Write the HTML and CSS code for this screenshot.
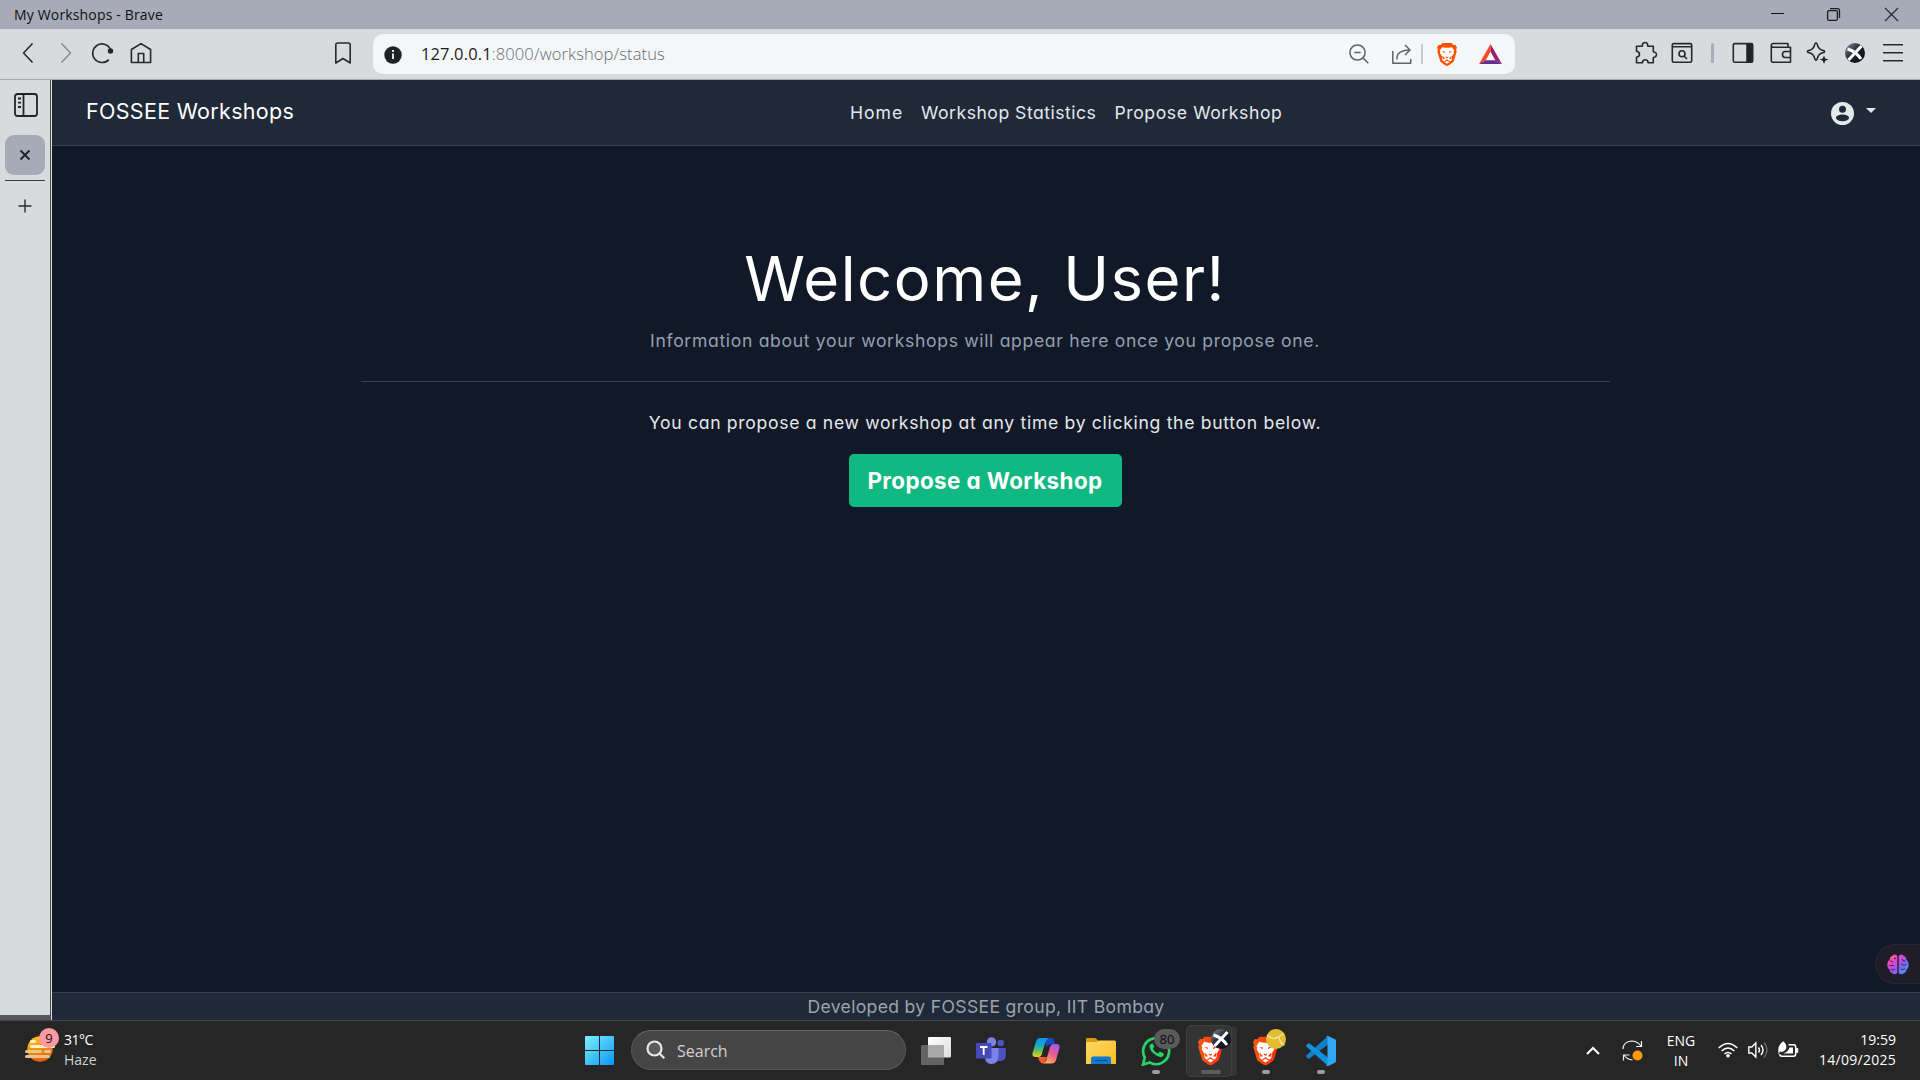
FILE: index.html
```html
<!DOCTYPE html>
<html lang="en">
<head>
<meta charset="utf-8">
<title>My Workshops - Brave</title>
<link rel="stylesheet" href="styles.css">
</head>
<body>
<svg class="defs" width="0" height="0">
  <defs>
    <linearGradient id="gLion" x1="0" y1="0" x2="1" y2="0"><stop offset="0" stop-color="#ff5a12"/><stop offset="1" stop-color="#ff2a08"/></linearGradient>
    <linearGradient id="gWin" gradientUnits="userSpaceOnUse" x1="0" y1="0" x2="29" y2="29"><stop offset="0" stop-color="#7df0ff"/><stop offset="1" stop-color="#0796f8"/></linearGradient>
    <linearGradient id="gBall" x1="0" y1="0" x2="1" y2="1"><stop offset="0" stop-color="#8c94a6"/><stop offset=".5" stop-color="#1d202b"/><stop offset="1" stop-color="#0b0c12"/></linearGradient>
    <symbol id="lion" viewBox="0 0 26 30">
      <path d="M7 0h12l2.400 2.700 2.600-.2L26 6l-1 2.500.6 2.500-4 13.500L15.500 29 13 30l-2.500-1L4.400 24.500.4 11 1 8.500 0 6l2-3.500 2.600.2z"/>
      <path fill="#fff" d="M6.500 5.500 11 6.300h4l4.500-.8 2.900 4.300-.7 1.600.5 1.800-3.200 5.200.5 1.400-.5 2.600-2.200 1.700-3.800-2.800-3.800 2.800L7 22.400l-.5-2.600.5-1.400-3.200-5.200.5-1.800-.7-1.600zM13 23l3.200 2L13 27l-3.200-2z"/>
      <path d="M6.500 10.500l4 .8-.6 2zM19.500 10.500l-4 .8.6 2zM11 17.500l2 .8 2-.8-.5 1.600L13 20l-1.500-.9zM7 16.500l3.500 4-3 .5zM19 16.500l-3.500 4 3 .5z"/>
    </symbol>
    <symbol id="avatar" viewBox="0 0 20 20">
      <circle cx="10" cy="10" r="10" fill="url(#gBall)"/>
      <path d="M3.500 17 16.500 3M2.500 6q5 1.500 8 4t5.500 6" stroke="#fff" stroke-width="3" fill="none"/>
    </symbol>
  </defs>
</svg>

<header class="titlebar">
  <span class="t-title">My Workshops - Brave</span>
  <div class="wincontrols">
    <svg width="15" height="15" viewBox="0 0 15 15"><path d="M1 6.500h13" stroke="#111"/></svg>
    <svg class="restore" width="15" height="15" viewBox="0 0 15 15" fill="none" stroke="#1b1c20" stroke-width="1.300"><rect x="1.600" y="3.600" width="9.800" height="9.800" rx="1.500"/><path d="M4 1.600h7.500q2 0 2 2V11"/></svg>
    <svg width="15" height="15" viewBox="0 0 15 15"><path d="m1 1 13 13M14 1 1 14" stroke="#2a2b30" stroke-width="1.200"/></svg>
  </div>
</header>

<nav class="toolbar">
  <div class="navgroup">
    <svg class="ic" viewBox="0 0 24 24"><path d="M16.500 2.500 7.500 12l9 9.500"/></svg>
    <svg class="ic faded" viewBox="0 0 24 24"><path d="m7.500 2.500 9 9.500-9 9.500"/></svg>
    <svg class="ic reload" viewBox="0 0 24 24"><path d="M18.800 18.600A9.300 9.300 0 1 1 20.300 8"/><circle cx="20.500" cy="10" r="1.900" class="solid"/></svg>
    <svg class="ic home" viewBox="0 0 24 24"><path d="M2.400 8.500 12 2.600l9.600 5.900v13H2.400zM9.300 21.500v-9h5.400v9"/></svg>
  </div>
  <svg class="ic bookmark" viewBox="0 0 24 24"><path d="M4.800 22V4q0-2 2-2h10.400q2 0 2 2v18L12 17.500z"/></svg>
  <div class="urlbar">
    <svg class="info" viewBox="0 0 18 18"><circle cx="9" cy="9" r="8.700" fill="#202124"/><path d="M9 4v2M9 7.500V13" stroke="#f5f6f8" stroke-width="1.800"/></svg>
    <span class="t-url"><b>127.0.0.1</b>:8000/workshop/status</span>
    <div class="urlicons">
      <svg class="ic grey" viewBox="0 0 24 24"><circle cx="10.500" cy="10.500" r="7.600"/><path d="m16 16 5.300 5.300M7.300 10.500h6.400"/></svg>
      <svg class="ic grey share" viewBox="0 0 24 24"><path d="M2.800 9v12.200h17.900V17M7 17.500Q6 8.500 19.500 8M15 3l5 5-5 5"/></svg>
      <i class="usep"></i>
      <svg class="lionSmall" viewBox="0 0 26 30"><use href="#lion"/></svg>
      <svg class="bat" viewBox="0 0 24 21"><path d="M12 0 0 21l7-4 5-9z" fill="#ff4724"/><path d="m12 0 12 21-7-4-5-9z" fill="#9e1f63"/><path d="M0 21h24l-7-4H7z" fill="#662d91"/></svg>
    </div>
  </div>
  <div class="toolicons">
    <svg class="ic puzzle" viewBox="0 0 24 24"><path d="M2.500 5.300h5.600q.6-.5.300-1.600a2.700 2.700 0 0 1 5.300 0q-.3 1.100.300 1.600h5.300v5.200q.5.700 1.400.7a2.500 2.500 0 0 1 0 4.800q-.9 0-1.400.8v5h-5.100q-.3-3-2.900-3t-2.900 3H2.500v-5.500q3-.4 3-3t-3-3z"/></svg>
    <svg class="ic" viewBox="0 0 24 24"><rect x="2.300" y="2.600" width="19.400" height="18.600" rx="1.500"/><path d="M2.500 5.800h19M14 15l3 3"/><circle cx="12" cy="12.700" r="3"/></svg>
    <i class="tsep"></i>
    <svg class="ic" viewBox="0 0 24 24"><rect x="2.300" y="2.600" width="19.400" height="18.600" rx="1.500"/><path d="M16 3h5v18h-5z" class="solid"/></svg>
    <svg class="ic wallet" viewBox="0 0 24 24"><path d="M2.300 4.500q0-2 2-2H19v3.700M2.300 4.500q0 1.700 2 1.700h17.200v15H4q-1.700 0-1.700-1.700zM21.500 10.500H16q-2.500.2-2.500 3t2.500 3h5.500"/></svg>
    <svg class="ic sparkle" viewBox="0 0 24 24"><path d="M11 2q1 0 1.300 1.400 1 5.300 6.300 6.200 2 .9 0 1.900-5.300.9-6.300 6.200Q11 20.500 9.700 17.700q-.9-5.300-6.300-6.200-2-1 0-1.900 5.400-.9 6.300-6.200Q10 2 11 2z"/><path class="solid" stroke="none" d="m19 14.500 1.200 2.900 3.300 1.100-3.300 1.200L19 23l-1.200-3.300-3.200-1.200 3.200-1.100z"/></svg>
    <svg class="ic avatarTop" viewBox="-2 -2 24 24"><use href="#avatar" width="20" height="20"/></svg>
    <svg class="ic" viewBox="0 0 24 24"><path d="M2 3.700h20M2 11.700h20M2 19.700h20"/></svg>
  </div>
</nav>

<div class="window">
  <aside class="tabs">
    <svg class="panel" viewBox="0 0 24 24"><rect x="1" y="1" width="22" height="22" rx="2.500"/><path d="M9.500 1v22M4 5.500h3M4 9.700h3M4 14h3"/></svg>
    <div class="tab"><svg width="12" height="12" viewBox="0 0 12 12"><path d="m1.500 1.500 9 9M10.500 1.500l-9 9" stroke="#222327" stroke-width="1.900"/></svg></div>
    <i class="tabline"></i>
    <svg class="plus" width="14" height="14" viewBox="0 0 14 14"><path d="M7 .5v13M.5 7h13" stroke="#2b2c30" stroke-width="1.400"/></svg>
    <i class="tabfoot"></i>
  </aside>

  <main class="page">
    <div class="navbar">
      <span class="t-brand">FOSSEE Workshops</span>
      <div class="links">
        <span class="t-home">Home</span>
        <span class="t-stat">Workshop Statistics</span>
        <span class="t-prop">Propose Workshop</span>
      </div>
      <div class="user">
        <svg width="23" height="23" viewBox="0 0 23 23"><circle cx="11.500" cy="11.500" r="11.500" fill="#e5e7eb"/><circle cx="11.500" cy="7.200" r="3.500" fill="#1f2937"/><ellipse cx="11.500" cy="15.800" rx="6.600" ry="3.400" fill="#1f2937"/></svg>
        <i class="caret"></i>
      </div>
    </div>
    <section class="hero">
      <h1>Welcome, User!</h1>
      <p class="t-lead">Information about your workshops will appear here once you propose one.</p>
      <hr>
      <p class="t-text">You can propose a new workshop at any time by clicking the button below.</p>
      <a class="btn"><span class="t-btn">Propose a Workshop</span></a>
    </section>
    <div class="assistant">
      <svg width="22" height="21" viewBox="0 0 22 21"><defs><linearGradient id="gBr" x1="0" y1="0" x2="1" y2="1"><stop offset="0" stop-color="#ff8a2a"/><stop offset=".3" stop-color="#ef3fd0"/><stop offset=".6" stop-color="#8a5cf0"/><stop offset="1" stop-color="#25b4ff"/></linearGradient></defs><path fill="url(#gBr)" d="M10.300 2v17q-2.500 2.500-5 .3Q2.600 18.500 2.500 15.500-.5 13 .5 10 .2 7.500 2.500 6 2.600 2.800 5.300 1.800q3-2.800 5 .2zm1.400 0v17q2.500 2.500 5 .3 2.700-.8 2.800-3.800 3-2.500 2-5.500.3-2.500-2-4-.1-3.200-2.800-4.200-3-2.800-5 .2z"/><path d="M3 7q2 0 3 1.500M2.500 11.500H7M4 15.500q2.500 1.500 4-.5M7 4.500h2M15 5q0 2 3 2M14 10q4 2.500 5.500 0M14 15q2.500 1.500 4-.5" stroke="#1f1d29" stroke-width=".8" fill="none"/></svg>
    </div>
    <footer class="footer"><span class="t-foot">Developed by FOSSEE group, IIT Bombay</span></footer>
  </main>
</div>

<footer class="taskbar">
  <div class="weather">
    <div class="wicon">
      <svg width="30" height="28" viewBox="0 0 30 28"><defs><linearGradient id="gSun" x1="0" y1="0" x2="0.300" y2="1"><stop offset="0" stop-color="#ffd21c"/><stop offset="1" stop-color="#ee5d0c"/></linearGradient></defs><circle cx="15" cy="14" r="12.700" fill="url(#gSun)"/><path d="M6.500 6.500h3M6.500 11.500h22" stroke="#fff0c8" stroke-width="3" stroke-linecap="round"/><path d="M1.500 16.500h14M20.500 16.500h4M1.500 21.500h22" stroke="#e2c78e" stroke-width="3" stroke-linecap="round"/></svg>
      <span class="wbadge">9</span>
    </div>
    <div class="wtext"><span class="t-temp">31°C</span><span class="t-haze">Haze</span></div>
  </div>
  <svg class="start" width="29" height="29" viewBox="0 0 29 29"><path fill="url(#gWin)" d="M0 1q0-1 1-1h13v14H0zM15 0h13q1 0 1 1v13H15zM0 15h14v14H1q-1 0-1-1zM15 15h14v13q0 1-1 1H15z"/></svg>
  <div class="search">
    <svg width="20" height="20" viewBox="0 0 20 20" fill="none" stroke="#e8e8ea" stroke-width="2.200"><circle cx="8.500" cy="8.500" r="7" fill="#5c5c5e"/><path d="m13.500 13.500 4.800 4.800"/></svg>
    <span class="t-search">Search</span>
  </div>
  <div class="apps">
    <div class="app"><svg width="30" height="28" viewBox="0 0 30 28"><defs><linearGradient id="gTv" x1="0" y1="0" x2="1" y2="1"><stop offset="0" stop-color="#fff"/><stop offset="1" stop-color="#dcdcdc"/></linearGradient></defs><rect x="7" y="0" width="23" height="20.500" rx="1" fill="url(#gTv)"/><rect x="0" y="8" width="23" height="20" rx="1" fill="#646464"/><path d="M7 8h16v12.500H7z" fill="#a9a9a9"/></svg></div>
    <div class="app"><svg width="30" height="28" viewBox="0 0 30 28"><circle cx="24.800" cy="6" r="3.300" fill="#4f52c4"/><circle cx="15.500" cy="5" r="4.700" fill="#7b83eb"/><path d="M21 11h8.800v7.500q0 5-5.500 5.500H21z" fill="#4f52c4"/><path d="M9 11h13.500v8.500Q22 27 15.500 27T9 20.500z" fill="#7b83eb"/><rect y="6" width="15.500" height="15.500" rx="1.300" fill="#4648b8"/><path d="M4 10h7.500M7.700 10v8" stroke="#fff" stroke-width="1.800"/></svg></div>
    <div class="app"><svg width="30" height="28" viewBox="0 0 30 28"><defs>
      <linearGradient id="c1" x1="0" y1="0" x2="0" y2="1"><stop offset="0" stop-color="#1592e8"/><stop offset=".35" stop-color="#12a5cf"/><stop offset=".65" stop-color="#5bbd62"/><stop offset="1" stop-color="#f6cf18"/></linearGradient>
      <linearGradient id="c2" x1="0.700" y1="0" x2="0.300" y2="1"><stop offset="0" stop-color="#a058ee"/><stop offset=".5" stop-color="#ee5a90"/><stop offset="1" stop-color="#ffab58"/></linearGradient></defs>
      <path d="M12 1h8.500q2.500.2 3.500 6h-4q-3 0-4 3z" fill="#1649c8"/><path d="M8 20h8l-3 6.500q-4 1-6-6.500z" fill="#f2592e"/>
      <path d="M9.500 1h8q-2.500 1.500-3.700 6L10.500 18q-.8 2-3 2H4q-3.500-.3-2.300-4.500L5 4.500Q6 1 9.500 1z" fill="url(#c1)"/><path d="M20.500 26.500h-8q2.500-1.500 3.500-6l3.200-11q.8-2.500 3-2.500H26q3.500.3 2.300 4.500L25 23q-1 3.500-4.500 3.500z" fill="url(#c2)"/></svg></div>
    <div class="app"><svg width="30" height="28" viewBox="0 0 30 28"><defs><linearGradient id="gFo" x1="0" y1="0" x2="1" y2="1"><stop offset="0" stop-color="#ffd96b"/><stop offset="1" stop-color="#f9bc1c"/></linearGradient></defs><path d="M0 2q0-1 1.500-1H9q1 0 2 1.500L12.500 4H20v6H0z" fill="#dd9a06"/><path d="M0 6.500Q0 5 1.500 5H10l3-1.500h15.500q1.500 0 1.500 1.500v22H0z" fill="url(#gFo)"/><path d="M5 27v-5q0-2.500 2.500-2.500h15Q25 19.500 25 22v5z" fill="#0f78cf"/><path d="M9 23.500h12" stroke="#074a92"/></svg></div>
    <div class="app"><svg width="30" height="30" viewBox="0 0 30 30"><path d="M2 28.500 3.800 21.500A13 13 0 1 1 8.800 26.500z" fill="#232624" stroke="#25d366" stroke-width="2.700"/><path d="M10.500 7.500 8.600 9.200q-1 4 4.400 8.600 4.500 4 7.800 3.200l2-1.900v-1.300l-3.800-2.200-2 2q-3.600-1.500-5.200-5.100l1.600-1.700-1.600-3.300z" fill="#25d366"/></svg><span class="count">80</span><i class="run"></i></div>
    <div class="app active"><svg class="lionBig" viewBox="0 0 26 30"><use href="#lion"/></svg><svg class="over" viewBox="0 0 20 20"><use href="#avatar"/></svg><i class="run wide"></i></div>
    <div class="app"><svg class="lionBig" viewBox="0 0 26 30"><use href="#lion"/></svg><svg class="over" viewBox="0 0 20 20"><circle cx="10" cy="10" r="10" fill="#e2bd31"/><path d="M1 6.500q6 4 9 2.500t8-4.500M13 8q1 7 5.500 8" stroke="#f5e6a0" stroke-width="1.400" fill="none"/></svg><i class="run"></i></div>
    <div class="app"><svg width="30" height="30" viewBox="0 0 30 30"><path d="M22 0v8.500L3.500 22.500Q2.500 23 1.800 22.300L.5 21q-.9-.9 0-1.800z" fill="#0f7fc9"/><path d="M22 30v-8.500L3.500 7.500Q2.500 7 1.800 7.700L.5 9q-.9.900 0 1.800z" fill="#1190dc"/><path d="M22 0l7 3.300q1 .5 1 1.700v20q0 1.200-1 1.700L22 30q-1 .4-2-.6.900.4 1.500-.9V1.500Q21 .2 20 .6q1-1 2-.6z" fill="#2fa9f2"/></svg><i class="run"></i></div>
  </div>
  <div class="tray">
    <svg class="chev" width="14" height="9" viewBox="0 0 14 9"><path d="m1 8 6-6 6 6" fill="none" stroke="#fff" stroke-width="2"/></svg>
    <svg class="sync" width="21" height="21" viewBox="0 0 21 21"><path d="M1 9Q1.500 1.500 9.500 1q6 0 9.500 5M19.500 1v5.500H14M10.500 20Q5 19.500 2 15M1.500 20.500V15h6" fill="none" stroke="#f0f0f0" stroke-width="1.200"/><circle cx="15.500" cy="15.500" r="5" fill="#ff9a0a"/></svg>
    <div class="lang"><span>ENG</span><span>IN</span></div>
    <svg class="wifi" width="20" height="16" viewBox="0 0 20 16"><path d="M.7 6Q10-3 19.300 6M3.600 9q6.400-6 12.800 0M6.500 12q3.500-3 7 0" fill="none" stroke="#fff" stroke-width="1.600"/><circle cx="10" cy="13.700" r="1.800" fill="#fff"/></svg>
    <svg class="snd" width="21" height="18" viewBox="0 0 21 18" fill="none" stroke="#fff" stroke-width="1.400"><path d="M.8 6h3l4-4v14l-4-4h-3zM10.500 6.500q2 2.500 0 5M13 4q4 5 0 10"/><path d="M16 1.500q6 7.500 0 15" stroke="#6b6b6b"/></svg>
    <svg class="batt" width="21" height="17" viewBox="0 0 21 17"><path d="M10.500 3.800h5q2.200 0 2.200 2.300v6.400q0 2.800-2.200 2.800H4q-2 0-2.500-2" fill="none" stroke="#fff" stroke-width="1.500"/><path d="M18.500 7.500h1.300v4h-1.300z" fill="#fff" stroke="#fff"/><path d="M11.500 6.500H15v6H5.500q4.500-1.500 6-6z" fill="#fff"/><path d="M.5 11.500Q-1 4.500 5.500.3 9.500 4 8 8q-2 4-6 2.500l-1.500 3z" fill="#fff"/></svg>
    <div class="clock"><span class="t-time">19:59</span><span class="t-date">14/09/2025</span></div>
  </div>
</footer>
</body>
</html>
```
FILE: styles.css
```css
* { box-sizing: border-box; }
html, body { margin: 0; height: 100%; }
body {
  display: flex; flex-direction: column; width: 1920px; height: 1080px;
  overflow: hidden; font-family: "Open Sans", "Noto Sans", sans-serif;
}
svg { display: block; flex: none; }
span { white-space: nowrap; }
i { display: block; flex: none; }
.defs { position: absolute; }

/* Window title */
.titlebar { height: 29px; flex: none; background: #a7abb7; display: flex; justify-content: space-between; padding: 0 21px 0 14px; }
.t-title { font-size: 14px; line-height: 30px; letter-spacing: .16px; color: #101114; }
.wincontrols { display: flex; gap: 42px; padding-top: 7px; }
.restore { margin: 0 1px 0 -1px; }

/* Browser toolbar */
.toolbar { height: 51px; flex: none; background: #d9dade; border-bottom: 1px solid #a8abb1; display: flex; align-items: flex-start; padding-top: 5px; }
.ic { width: 24px; height: 24px; fill: none; stroke: #27282c; stroke-width: 1.6; stroke-linejoin: round; }
.ic .solid { fill: #202124; }
.faded { stroke: #8b8c91; margin-left: 14px; }
.grey { stroke: #5f6368; stroke-width: 1.5; }
.navgroup { display: flex; padding: 7px 0 0 16px; }
.reload { margin-left: 12px; margin-right: 15px; }
.bookmark { margin: 7px 0 0 178px; }
.urlbar { margin-left: 18px; width: 1142px; height: 40px; background: #f5f6f8; border-radius: 10px; display: flex; align-items: center; padding: 0 13px 0 11px; }
.info { width: 18px; height: 18px; margin-top: 1px; }
.t-url { margin-left: 19px; font-size: 16.5px; line-height: 38px; letter-spacing: .12px; color: #6a6c71; font-weight: 300; }
.t-url b { font-weight: 400; color: #1c1d20; }
.urlicons { display: flex; align-items: center; margin-left: auto; }
.share { margin-left: 19px; }
.usep { width: 2px; height: 20px; background: #cacbcf; margin: 0 14px 0 7px; }
.lionSmall { width: 20px; height: 23px; fill: #ff5000; }
.bat { width: 23px; height: 20px; margin-left: 22px; }
.toolicons { display: flex; padding-top: 7px; margin-left: 119px; }
.puzzle { margin-right: 12px; }
.tsep { width: 3px; height: 20px; border-radius: 2px; background: #a9adb9; margin: 2px 17px 0 17px; }
.wallet { margin-left: 14px; margin-right: 12px; }
.avatarTop { margin-left: 14px; margin-right: 14px; stroke: none; }

/* Vertical tab strip */
.window { flex: 1; display: flex; min-height: 0; }
.tabs { width: 52px; flex: none; background: #d9dade; border-right: 1px solid #dddee2; box-shadow: inset -1px 0 #4b4c51; display: flex; flex-direction: column; align-items: center; padding: 13px 1px 0 0; }
.panel { width: 24px; height: 24px; margin-left: 1px; fill: none; stroke: #222327; stroke-width: 1.8; }
.tab { width: 40px; height: 40px; margin-top: 18px; border-radius: 9px; background: #a7abb7; display: flex; align-items: center; justify-content: center; }
.tabline { width: 40px; height: 1px; margin: 5px 0 18px; background: #3c3d42; }
.tabfoot { align-self: stretch; height: 5px; background: #55565b; margin-top: auto; }

/* Page */
.page { flex: 1; position: relative; display: flex; flex-direction: column; background: #111827; font-family: Inter, "Open Sans", sans-serif; font-feature-settings: "cv11"; color: #e5e7eb; }
.navbar { height: 66px; flex: none; background: #1f2937; border-bottom: 1px solid #374151; display: grid; grid-template-columns: 764px 1fr 89px; padding-left: 34px; }
.t-brand { font-size: 21.5px; line-height: 62px; letter-spacing: .3px; color: #fff; }
.links { display: flex; gap: 18px; font-size: 17.6px; line-height: 65px; }
.t-home { letter-spacing: .95px; }
.t-stat { letter-spacing: .5px; }
.t-prop { letter-spacing: .6px; }
.user { display: flex; padding-top: 22px; }
.caret { width: 0; height: 0; margin: 6px 0 0 12px; border: 5px solid transparent; border-top-color: #e5e7eb; border-bottom: 0; }
.hero { flex: 1; width: 1249px; align-self: center; margin-right: 2px; display: flex; flex-direction: column; align-items: center; padding-top: 96px; }
.hero h1 { margin: 0; font-weight: 400; font-size: 61.6px; line-height: 74px; letter-spacing: 1.5px; color: #fff; }
.hero p { margin: 0; font-size: 17.6px; line-height: 26px; }
.hero .t-lead { margin-top: 12px; letter-spacing: .66px; color: #94a0af; }
.hero .t-text { letter-spacing: .68px; }
.hero hr { width: 100%; margin: 27px 0 28px; border: 0; border-top: 1px solid #374151; }
.btn { width: 273px; height: 53px; margin-top: 18px; border-radius: 5px; background: #10b981; display: flex; align-items: center; justify-content: center; }
.t-btn { font-size: 22.4px; font-weight: 700; letter-spacing: .4px; color: #fff; }
.assistant { position: absolute; right: 0; bottom: 36px; width: 45px; height: 40px; border: 1px solid #272734; border-right: 0; border-radius: 20px 0 0 20px; background: #1f1d29; display: flex; align-items: center; padding-left: 11px; }
.footer { height: 28px; flex: none; border-top: 1px solid #374151; background: #1f2937; text-align: center; font-size: 17.6px; line-height: 27px; letter-spacing: .32px; color: #9ca3af; }

/* Taskbar */
.taskbar { position: relative; height: 60px; flex: none; background: #262626; border-top: 1px solid #484848; display: flex; color: #fff; font-size: 14px; }
.weather { width: 585px; display: flex; padding: 9px 0 0 25px; }
.wicon { position: relative; width: 30px; padding-top: 5px; }
.wbadge { position: absolute; left: 14px; top: -2px; width: 20px; height: 20px; border-radius: 50%; background: #ff99a4; color: #1c1214; font-size: 13px; line-height: 20px; text-align: center; }
.wtext { display: flex; flex-direction: column; margin-left: 9px; line-height: 20px; }
.t-temp { letter-spacing: -.5px; }
.t-haze { color: #cfcfcf; }
.start { margin-top: 15px; }
.search { width: 275px; height: 40px; margin: 9px 2px 0 17px; border-radius: 20px; background: #454545; border: 1px solid #565656; border-top-color: #686868; display: flex; align-items: center; padding-left: 14px; }
.search span { margin-left: 11px; padding-top: 2px; font-size: 16px; color: #d2d2d2; }
.apps { display: flex; }
.app { width: 55px; height: 59px; position: relative; display: flex; align-items: center; justify-content: center; }
.run { position: absolute; left: 24px; top: 49px; width: 8px; height: 4px; border-radius: 2px; background: #9c9c9c; }
.run.wide { left: 18px; width: 20px; background: #5d5d5d; }
.count { position: absolute; left: 26px; top: 8px; width: 26px; height: 20px; border-radius: 10px; background: #5a5a5a; color: #0c0c0c; font-size: 13px; line-height: 20px; text-align: center; }
.active::before { content: ""; position: absolute; left: 3px; top: 4px; width: 44px; height: 50px; border-radius: 5px; background: #343434; border: 1px solid #404040; box-shadow: 6px 0 0 -1px #353535; }
.lionBig { width: 25px; height: 30px; fill: url(#gLion); position: relative; }
.over { position: absolute; left: 28px; top: 8px; width: 20px; height: 20px; }
.tray { flex: 1; display: flex; }
.chev { margin: 25px 0 0 238px; }
.sync { margin: 19px 0 0 22px; }
.lang { display: flex; flex-direction: column; align-items: center; width: 28px; margin: 10px 0 0 24px; line-height: 20px; }
.wifi { margin: 21px 0 0 23px; }
.snd { margin: 20px 0 0 10px; }
.batt { margin: 20px 0 0 9px; }
.clock { flex: 1; display: flex; flex-direction: column; align-items: flex-end; padding: 9px 24px 0 0; line-height: 20px; }
.t-date { letter-spacing: .27px; }
```
